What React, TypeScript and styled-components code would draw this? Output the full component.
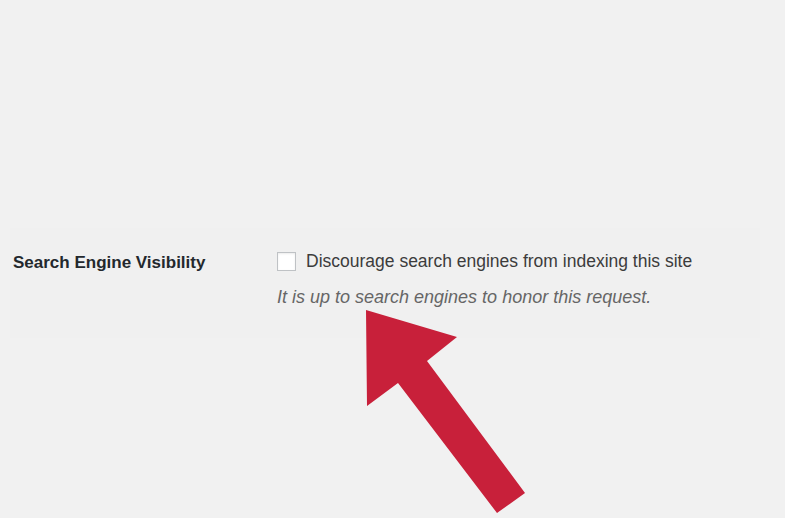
import React from 'react';
import styled, { createGlobalStyle } from 'styled-components';

const GlobalStyle = createGlobalStyle`
  html, body {
    margin: 0;
    padding: 0;
    background: #f1f1f1;
  }
  body {
    font-family: 'Liberation Sans', Arial, sans-serif;
  }
`;

const s = {
  Page: styled.div`
    width: 785px;
    height: 518px;
    background: #f1f1f1;
    position: relative;
    overflow: hidden;
    padding-top: 228px;
    box-sizing: border-box;
  `,
  Row: styled.div`
    display: flex;
    margin: 0 25px 0 10px;
    height: 110px;
  `,
  LabelCell: styled.div`
    width: 253px;
    background: #f0f0f0;
    padding: 25px 0 0 3px;
    box-sizing: border-box;
  `,
  Label: styled.div`
    font-size: 17px;
    font-weight: bold;
    color: #23282d;
  `,
  FieldCell: styled.div`
    flex: 1;
    background: #f0f0f0;
    padding: 23px 0 0 14px;
    box-sizing: border-box;
  `,
  CheckLine: styled.label`
    display: flex;
    align-items: center;
    gap: 10px;
  `,
  Checkbox: styled.span`
    width: 17px;
    height: 17px;
    background: #fff;
    border: 1px solid #bfc2c5;
    box-shadow: inset 0 1px 2px rgba(0, 0, 0, 0.08);
  `,
  CheckText: styled.span`
    font-size: 17.5px;
    color: #3c3c3c;
  `,
  Description: styled.p`
    margin: 15px 0 0;
    font-size: 18px;
    font-style: italic;
    color: #666;
  `,
  Arrow: styled.svg`
    position: absolute;
    left: 0;
    top: 0;
    pointer-events: none;
  `,
};

export default function App() {
  return (
    <>
      <GlobalStyle />
      <s.Page>
        <s.Row>
          <s.LabelCell>
            <s.Label>Search Engine Visibility</s.Label>
          </s.LabelCell>
          <s.FieldCell>
            <s.CheckLine>
              <s.Checkbox />
              <s.CheckText>Discourage search engines from indexing this site</s.CheckText>
            </s.CheckLine>
            <s.Description>It is up to search engines to honor this request.</s.Description>
          </s.FieldCell>
        </s.Row>
        <s.Arrow width="785" height="518" viewBox="0 0 785 518">
          <polygon
            points="366,310 457,337 427,361 525,493 497,513 398,383 367,406"
            fill="#c8203a"
          />
        </s.Arrow>
      </s.Page>
    </>
  );
}
